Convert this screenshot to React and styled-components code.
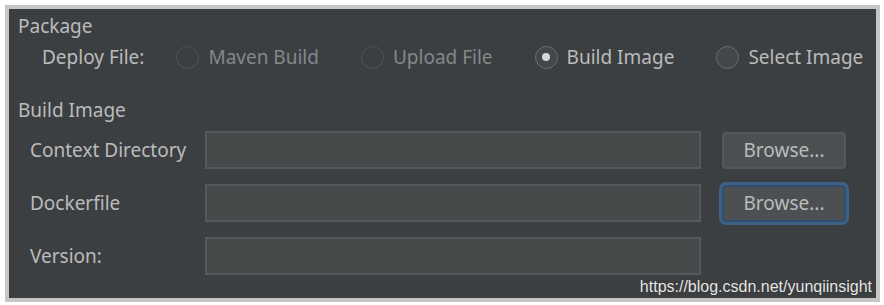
import styled, { createGlobalStyle } from "styled-components";

const GlobalStyle = createGlobalStyle`
  html, body {
    margin: 0;
    padding: 0;
    background: #ffffff;
  }
  body {
    font-family: "Noto Sans", "Open Sans", sans-serif;
  }
`;

const Frame = styled.div`
  margin: 5px 3px 3px 5px;
  border: 4px solid #c6c6c6;
  width: 867px;
  height: 289px;
  box-sizing: content-box;
  background: #3c3f41;
  position: relative;
  padding: 0;
`;

const Panel = styled.div`
  display: flex;
  flex-direction: column;
  padding: 5px 0 0 9px;
  color: #bbbbbb;
  font-size: 19px;
`;

const SectionTitle = styled.div`
  height: 24px;
  line-height: 24px;
  margin-top: ${(p) => p.$top || 0}px;
`;

const DeployRow = styled.div`
  display: flex;
  align-items: center;
  height: 30px;
  margin-top: 4px;
  padding-left: 24px;
`;

const RowLabel = styled.span`
  margin-right: 32px;
  line-height: 30px;
`;

const RadioGroup = styled.div`
  display: flex;
  align-items: center;
  gap: 42px;
`;

const RadioItem = styled.label`
  display: flex;
  align-items: center;
  gap: 9px;
  color: ${(p) => (p.$disabled ? "#84878a" : "#bbbbbb")};
`;

const RadioCircle = styled.span`
  width: 21px;
  height: 21px;
  border-radius: 50%;
  border: 1px solid ${(p) => (p.$disabled ? "#525557" : "#6b6e70")};
  background: ${(p) => (p.$disabled ? "transparent" : "#43474a")};
  display: flex;
  align-items: center;
  justify-content: center;
  flex-shrink: 0;

  &::after {
    content: "";
    display: ${(p) => (p.$checked ? "block" : "none")};
    width: 8px;
    height: 8px;
    border-radius: 50%;
    background: #d6d6d6;
  }
`;

const FormGrid = styled.div`
  display: grid;
  grid-template-columns: 154px 496px 124px;
  column-gap: 21px;
  row-gap: 15px;
  grid-auto-rows: 38px;
  margin-top: 9px;
  padding-left: 12px;
  align-items: center;
`;

const FieldLabel = styled.span`
  line-height: 38px;
  white-space: nowrap;
`;

const TextInput = styled.div`
  height: 38px;
  box-sizing: border-box;
  border: 2px solid #56595b;
  background: #45494a;
`;

const BrowseButton = styled.button`
  height: 37px;
  box-sizing: border-box;
  border: 2px solid ${(p) => (p.$focused ? "#2f4f70" : "#55585a")};
  border-radius: 4px;
  background: #4c5052;
  color: #bbbbbb;
  font-family: inherit;
  font-size: 19px;
  padding: 0;
  box-shadow: ${(p) => (p.$focused ? "0 0 0 3px #3d6185" : "none")};
`;

const Watermark = styled.div`
  position: absolute;
  right: 4px;
  bottom: 2px;
  font-family: "Liberation Sans", Arial, sans-serif;
  font-size: 16px;
  line-height: 18px;
  color: #e6e6e6;
  text-shadow: 0 0 1px #2a2a2a;
`;

const radios = [
  { label: "Maven Build", disabled: true },
  { label: "Upload File", disabled: true },
  { label: "Build Image", checked: true },
  { label: "Select Image" },
];

const fields = [
  { label: "Context Directory", browse: true },
  { label: "Dockerfile", browse: true, focused: true },
  { label: "Version:" },
];

const App = () => {
  return (
    <>
      <GlobalStyle />
      <Frame>
        <Panel>
          <SectionTitle>Package</SectionTitle>
          <DeployRow>
            <RowLabel>Deploy File:</RowLabel>
            <RadioGroup>
              {radios.map((r) => (
                <RadioItem key={r.label} $disabled={r.disabled}>
                  <RadioCircle $disabled={r.disabled} $checked={r.checked} />
                  {r.label}
                </RadioItem>
              ))}
            </RadioGroup>
          </DeployRow>
          <SectionTitle $top={26}>Build Image</SectionTitle>
          <FormGrid>
            {fields.map((f) => [
              <FieldLabel key={f.label + "-l"}>{f.label}</FieldLabel>,
              <TextInput key={f.label + "-i"} />,
              f.browse ? (
                <BrowseButton key={f.label + "-b"} $focused={f.focused}>
                  Browse...
                </BrowseButton>
              ) : (
                <span key={f.label + "-e"} />
              ),
            ])}
          </FormGrid>
        </Panel>
        <Watermark>https://blog.csdn.net/yunqiinsight</Watermark>
      </Frame>
    </>
  );
};

export default App;
